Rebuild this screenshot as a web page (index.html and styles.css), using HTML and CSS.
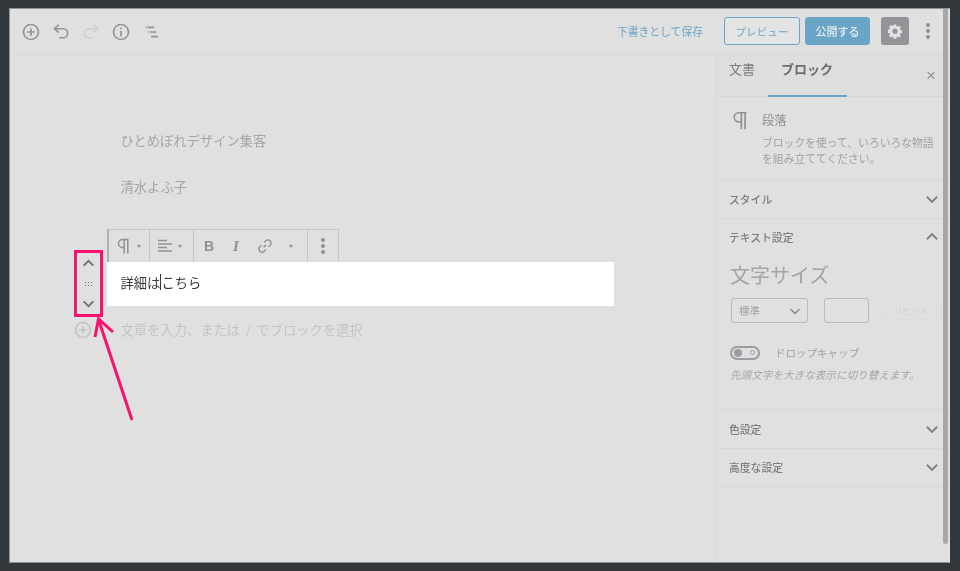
FILE: index.html
```html
<!DOCTYPE html>
<html lang="ja">
<head>
<meta charset="utf-8">
<title>ブロックエディター</title>
<link rel="stylesheet" href="styles.css">
</head>
<body>
<div class="frame">
  <header class="topbar">
    <div class="tools">
      <svg class="ico" viewBox="0 0 20 20"><circle cx="10" cy="10" r="6.8"/><path d="M10 6.5v7M6.5 10h7"/></svg>
      <svg class="ico" viewBox="0 0 20 20"><path d="M8 3.5 4 7l4 3.5" /><path d="M4.5 7H12a3.6 3.6 0 0 1 0 8.2H8.5"/></svg>
      <svg class="ico faint" viewBox="0 0 20 20"><path d="m12 3.5 4 3.5-4 3.5"/><path d="M15.5 7H8a3.6 3.6 0 0 0 0 8.2h3.5"/></svg>
      <svg class="ico" viewBox="0 0 20 20"><circle cx="10" cy="10" r="6.8"/><path d="M10 9v5M10 6v1.6"/></svg>
      <svg class="ico" viewBox="0 0 20 20"><path d="M7 5.800h6M5.300 5.800h1M9 10h6M7 10h1M10 14.200h6.400"/></svg>
    </div>
    <div class="actions">
      <span class="save">下書きとして保存</span>
      <span class="btn preview">プレビュー</span>
      <span class="btn publish">公開する</span>
      <span class="gear">
        <svg viewBox="0 0 20 20"><path class="gear-shape" fill-rule="evenodd" d="M8.4 2.500h3.200l.4 2.100 1.300.6 1.800-1.200 2.200 2.200-1.200 1.800.6 1.300 2.100.4v3.200l-2.100.4-.6 1.300 1.200 1.800-2.200 2.200-1.800-1.200-1.300.6-.4 2.100H8.400l-.4-2.100-1.300-.6-1.800 1.200-2.200-2.200 1.200-1.800-.6-1.300-2.100-.4V8.700l2.100-.4.6-1.300-1.200-1.800 2.200-2.200 1.800 1.200 1.300-.6zM10 7.400a3.200 3.200 0 1 0 0 6.400 3.200 3.200 0 0 0 0-6.400z" transform="translate(1 .6) scale(.9)"/></svg>
      </span>
      <span class="dots"><i></i><i></i><i></i></span>
    </div>
  </header>
  <div class="main">
    <main class="canvas">
      <p class="line first">ひとめぼれデザイン集客</p>
      <p class="line">清水よふ子</p>
      <div class="toolbar">
        <span class="tb-group g1">
          <svg class="tb-ico" viewBox="0 0 20 20"><path d="M14.500 3.500H8.500a4 4 0 0 0 0 8H10M10.200 3.500v14M13.800 3.500v14"/></svg><b class="caret"></b>
        </span>
        <span class="tb-group g2">
          <svg class="tb-ico" viewBox="0 0 20 20"><path d="M3 4.500h9M3 8h14M3 11.500h9M3 15h14"/></svg><b class="caret"></b>
        </span>
        <span class="tb-group g3">
          <span class="fmt bold">B</span>
          <span class="fmt ital">I</span>
          <svg class="tb-ico link" viewBox="0 0 20 20"><path d="m8.500 11.500 3-3M9 6l1.800-1.800a3.200 3.200 0 0 1 4.900 4.900L14 11M11 14l-1.800 1.800a3.200 3.200 0 0 1-4.900-4.900L6 9"/></svg>
          <b class="caret lone"></b>
        </span>
        <span class="tb-group g4"><span class="dots small"><i></i><i></i><i></i></span></span>
      </div>
      <div class="active-block">詳細は<span class="cursor"></span>こちら</div>
      <div class="placeholder">文章を入力、または / でブロックを選択</div>

      <svg class="add-faint" viewBox="0 0 20 20"><circle cx="10" cy="10" r="6.800"/><path d="M10 6.500v7M6.500 10h7"/></svg>
      <div class="mover">
        <svg viewBox="0 0 14 14"><path d="m2.500 9 4.500-4.500L11.500 9"/></svg>
        <span class="grip"></span>
        <svg viewBox="0 0 14 14"><path d="m2.500 5 4.500 4.500L11.500 5"/></svg>
      </div>
      <svg class="arrow" viewBox="0 0 60 110"><path d="M45 105 12 6M8 22l3.500-18L26 17"/></svg>
    </main>
    <aside class="sidebar">
      <div class="tabs">
        <span class="tab">文書</span>
        <span class="tab on">ブロック</span>
        <span class="close">×</span>
      </div>
      <section class="card">
        <svg class="card-ico" viewBox="0 0 20 20"><path d="M15 2.500H8a4.200 4.200 0 0 0 0 8.400h2M10.300 2.500v15M13.700 2.500v15"/></svg>
        <div class="card-body">
          <div class="card-title">段落</div>
          <p class="card-desc">ブロックを使って、いろいろな物語を組み立ててください。</p>
        </div>
      </section>
      <section class="panel">
        <div class="panel-head"><span>スタイル</span><svg class="chev" viewBox="0 0 14 14"><path d="m2.500 5 4.500 4.500L11.500 5"/></svg></div>
      </section>
      <section class="panel open">
        <div class="panel-head"><span>テキスト設定</span><svg class="chev" viewBox="0 0 14 14"><path d="m2.500 9 4.500-4.500L11.500 9"/></svg></div>
        <div class="fs-title">文字サイズ</div>
        <div class="fs-row">
          <span class="select">標準<svg class="chev-s" viewBox="0 0 14 14"><path d="m2.500 5 4.500 4.500L11.500 5"/></svg></span>
          <span class="num"></span>
          <span class="reset">リセット</span>
        </div>
        <div class="toggle-row">
          <span class="toggle"><i class="knob"></i><i class="ring"></i></span>
          <span class="toggle-label">ドロップキャップ</span>
        </div>
        <p class="help">先頭文字を大きな表示に切り替えます。</p>
      </section>
      <section class="panel">
        <div class="panel-head"><span>色設定</span><svg class="chev" viewBox="0 0 14 14"><path d="m2.500 5 4.500 4.500L11.500 5"/></svg></div>
      </section>
      <section class="panel">
        <div class="panel-head"><span>高度な設定</span><svg class="chev" viewBox="0 0 14 14"><path d="m2.500 5 4.500 4.500L11.500 5"/></svg></div>
      </section>
    </aside>
  </div>
  <span class="thumb"></span>
</div>
</body>
</html>
```

FILE: styles.css
```css
* { box-sizing: border-box; }
html, body { height: 100%; }
body {
  margin: 0;
  padding: 8px 9px 8px 9px;
  background: #32373c;
  font-family: "Noto Sans CJK JP", "Noto Sans", sans-serif;
  overflow: hidden;
}
.frame {
  position: relative;
  height: 555px;
  width: 941px;
  display: flex;
  flex-direction: column;
  background: #e0e0e0;
  border: 1px solid #8f9193;
  border-right-color: #e0e0e0;
  filter: blur(.5px);
}
.topbar {
  height: 46px;
  flex: none;
  display: flex;
  justify-content: space-between;
  align-items: center;
  border-bottom: 1px solid #d9d9d9;
  padding: 0 19px 1px 10px;
}
.tools { display: flex; gap: 8px; align-items: center; margin-top: 1px; }
.ico { width: 22px; height: 22px; fill: none; stroke: #929497; stroke-width: 1.500; }
.ico.faint { stroke: #cfcfcf; }
.actions { display: flex; align-items: center; }
.save { font-size: 10.800px; color: #6ba5c5; margin-right: 21px; }
.btn {
  height: 28px;
  border-radius: 3px;
  font-size: 10.600px;
  display: flex;
  align-items: center;
  justify-content: center;
  font-weight: 500;
}
.preview { width: 76px; border: 1px solid #6ba5c5; color: #86b2cb; background: #e3e4e4; }
.publish { width: 65px; margin-left: 5px; background: #6ba5c5; color: #e8eef1; border: 1px solid #6ba5c5; font-size: 11px; }
.gear {
  width: 28px; height: 28px; margin-left: 11px;
  background: #929497; border-radius: 3px;
  display: flex; align-items: center; justify-content: center;
}
.gear svg { width: 18px; height: 18px; }
.gear-shape { fill: #e2e2e2; }
.dots { display: flex; flex-direction: column; gap: 1.800px; margin-left: 17px; }
.dots i { width: 4px; height: 4px; border-radius: 50%; background: #8e9093; display: block; }
.main { flex: 1; display: flex; min-height: 0; }
.canvas { position: relative; width: 706px; flex: none; padding: 76px 0 0 97px; }
.line { margin: 0 0 26px 13.500px; height: 20px; line-height: 20px; font-size: 13.300px; color: #a5a5a5; }
.toolbar {
  margin-top: 32px;
  width: 232px;
  height: 33px;
  display: flex;
  border: 1px solid #c6c6c6;
  border-left: 2px solid #b0b0b0;
  border-bottom: none;
}
.tb-group { display: flex; align-items: center; height: 100%; border-right: 1px solid #c6c6c6; flex: none; position: relative; }
.tb-group:last-child { border-right: none; }
.g1 { width: 41px; padding-left: 5px; }
.g2 { width: 44px; padding-left: 5px; }
.g3 { width: 114px; padding-left: 6px; }
.g4 { width: 30px; justify-content: center; }
.tb-ico { width: 20px; height: 20px; fill: none; stroke: #8f9193; stroke-width: 1.500; flex: none; }
.caret { display: block; width: 0; height: 0; border: 2.500px solid transparent; border-top: 3px solid #8f9193; border-bottom: 0; margin-left: 3px; }
.caret.lone { margin-left: 15px; }
.fmt { width: 18px; font-size: 14px; font-family: "Liberation Sans", sans-serif; color: #8f9193; text-align: center; line-height: 18px; }
.bold { font-weight: 700; }
.ital { font-style: italic; margin-left: 9px; font-family: "Liberation Serif", serif; font-weight: 700; font-size: 15px; }
.tb-ico.link { width: 18px; height: 18px; margin-left: 11px; }
.dots.small { margin: 0; gap: 2px; }
.active-block {
  width: 507px;
  height: 44px;
  background: #fff;
  padding: 0 0 4px 13.500px;
  display: flex;
  align-items: center;
  font-size: 13.300px;
  color: #3a3a3a;
}
.cursor { display: inline-block; width: 1px; height: 16px; background: #32373c; }
.placeholder { margin: 14px 0 0 13.500px; font-size: 13.300px; line-height: 20px; color: #c4c4c4; word-spacing: 2.500px; }
.add-faint { position: absolute; left: 62px; top: 264px; width: 22px; height: 22px; fill: none; stroke: #c2c2c2; stroke-width: 1.500; }
.mover {
  position: absolute; left: 64px; top: 195px;
  width: 29px; height: 67px;
  border: 3px solid #f7136d;
  display: flex; flex-direction: column; align-items: center; justify-content: space-between;
  padding: 3px 0 3px;
}
.mover svg { width: 15px; height: 15px; fill: none; stroke: #6f7276; stroke-width: 1.800; }
.grip {
  width: 9px; height: 6px;
  background-image: radial-gradient(circle, #6f7276 .8px, transparent .9px);
  background-size: 3px 3px;
}
.arrow { position: absolute; left: 77px; top: 260px; width: 60px; height: 110px; fill: none; stroke: #f7136d; stroke-width: 3; }
.sidebar { flex: 1; border-left: 1px solid #d9d9d9; }
.tabs { height: 42px; background: #dedede; border-bottom: 1px solid #d7d7d7; display: flex; position: relative; padding-left: 12px; }
.tab { font-size: 13px; color: #7c7c7c; line-height: 28px; height: 42px; }
.tab.on { margin-left: 13px; width: 79px; padding-left: 13px; font-weight: 700; color: #6d6d6d; border-bottom: 2px solid #6ba5c5; }
.close { position: absolute; left: 209px; top: 11px; font-size: 17px; color: #959595; line-height: 20px; font-family: "Liberation Sans", sans-serif; }
.card { height: 83px; display: flex; padding: 13px 0 0 13px; border-bottom: 1px solid #d9d9d9; }
.card-ico { width: 22px; height: 22px; fill: none; stroke: #8f9193; stroke-width: 1.500; flex: none; }
.card-body { margin-left: 10px; }
.card-title { font-size: 12.300px; color: #909090; line-height: 20px; }
.card-desc { margin: 4px 0 0; width: 177px; font-size: 10.800px; line-height: 16px; color: #a0a0a0; }
.panel { border-bottom: 1px solid #d9d9d9; }
.panel-head { height: 37.500px; display: flex; justify-content: space-between; align-items: center; padding: 0 9px 0 12px; font-size: 10.800px; font-weight: 500; color: #7d7d7d; }
.chev { width: 16px; height: 16px; fill: none; stroke: #808284; stroke-width: 1.700; }
.panel.open { height: 191.500px; }
.fs-title { margin: 5px 0 0 13px; font-size: 20px; line-height: 28px; color: #a3a3a3; }
.fs-row { margin: 9px 0 0 14px; display: flex; align-items: flex-start; }
.select { width: 77px; height: 25px; border: 1px solid #b8bbbd; border-radius: 3px; padding: 0 0 0 7px; font-size: 10.500px; color: #a0a0a0; display: flex; align-items: center; justify-content: space-between; }
.chev-s { width: 14px; height: 14px; fill: none; stroke: #7e8184; stroke-width: 1.300; margin-right: 5px; }
.num { width: 45px; height: 25px; border: 1px solid #b8bbbd; border-radius: 3px; margin-left: 16px; }
.reset { width: 52px; height: 20px; margin: 2px 0 0 16px; border: 1px solid #dcdcdc; border-radius: 3px; font-size: 8.500px; color: #d0d0d0; display: flex; align-items: center; justify-content: center; }
.toggle-row { margin: 22px 0 0 13px; display: flex; align-items: center; }
.toggle { width: 30px; height: 14px; border: 2px solid #9a9da1; border-radius: 8px; display: flex; align-items: center; justify-content: space-between; padding: 0 3px 0 2px; }
.knob { width: 8px; height: 8px; border-radius: 50%; background: #9a9da1; display: block; }
.ring { width: 5px; height: 5px; border-radius: 50%; border: 1px solid #9a9da1; display: block; }
.toggle-label { margin-left: 15px; font-size: 10.500px; color: #a0a0a0; }
.help { margin: 7px 0 0 13px; font-size: 10.600px; font-style: italic; color: #a6a6a6; line-height: 16px; }
.thumb { position: absolute; left: 933px; top: 0; width: 5px; height: 535px; background: #a8a8a8; border-radius: 0 0 3px 3px; }
```
